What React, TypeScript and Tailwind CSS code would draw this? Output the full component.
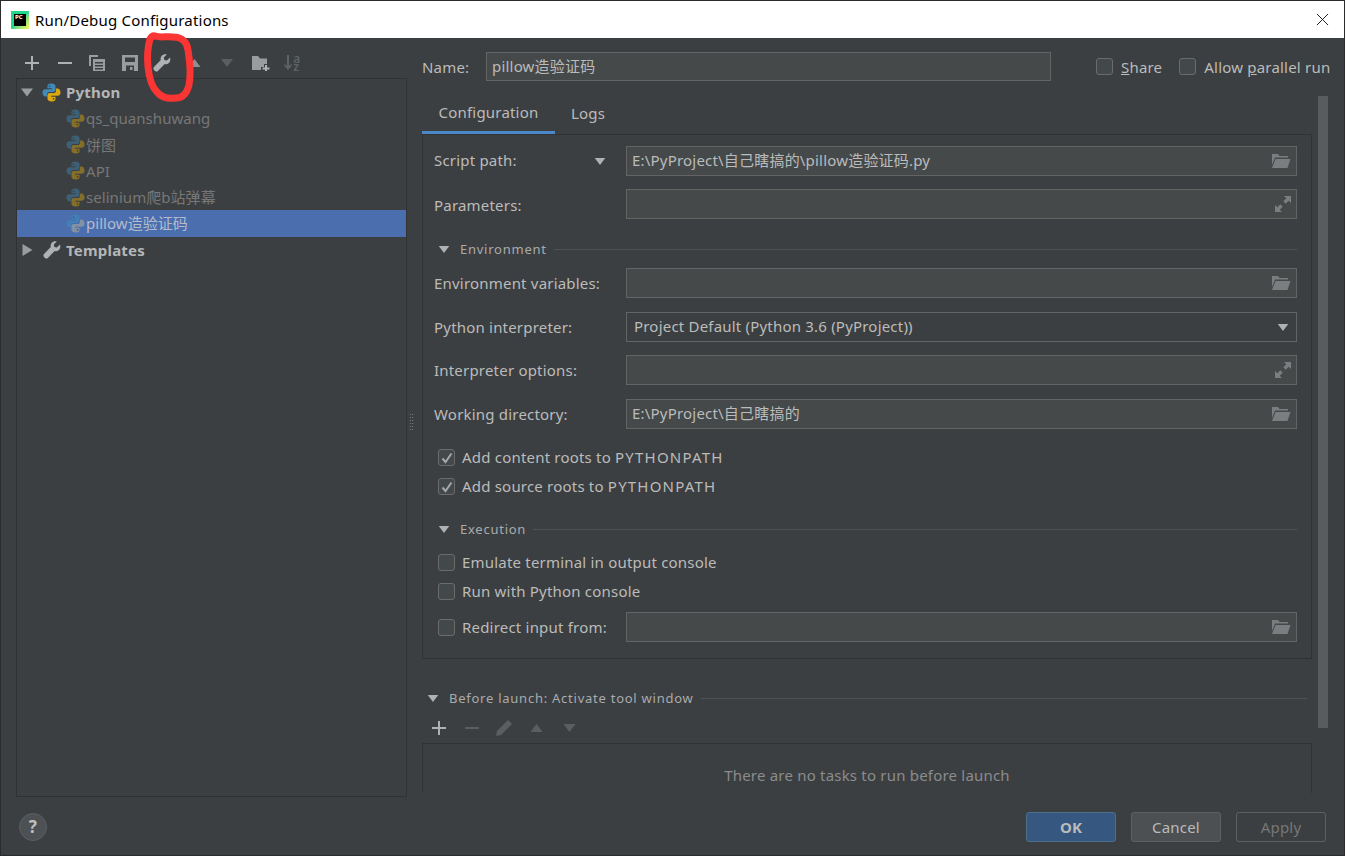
import type { ReactNode } from 'react';

const FONT = 'font-["Noto_Sans","Noto_Sans_CJK_SC",sans-serif]';

function PythonLogo({ className = '', dim = '', yellow = '#d9a70f' }: { className?: string; dim?: string; yellow?: string }) {
  const blue = 'M8 .4C5.2.4 4.6 1.600 4.6 2.800v1.700H8.200v.7H2.900C1.500 5.200.4 6.100.4 8s1.100 3.400 2.400 3.400h1.400V9.500C4.200 8.300 5.100 7.500 6.200 7.500h3.400c1 0 1.800-.7 1.800-1.700V2.800C11.400 1.500 10 .4 8 .4z';
  return (
    <svg viewBox="0 0 16 16" className={`${className} ${dim}`}>
      <path d={blue} fill="#3f8ab8" />
      <circle cx="6.300" cy="2.700" r=".7" fill="#3c3f41" />
      <g transform="rotate(180 8 8)">
        <path d={blue} fill={yellow} />
        <circle cx="6.300" cy="2.700" r=".7" fill="#3c3f41" />
      </g>
    </svg>
  );
}

function Tri({ down = true, className = 'w-3 h-2', fill = '#afb1b3' }: { down?: boolean; className?: string; fill?: string }) {
  return (
    <svg viewBox="0 0 12 8" className={className}>
      <path d={down ? 'M0 0h12L6 8z' : 'M6 0l6 8H0z'} fill={fill} />
    </svg>
  );
}

function TreeArrowRight() {
  return (
    <svg viewBox="0 0 10 12" className="w-[11px] h-[12px]">
      <path d="M0 0l10 6-10 6z" fill="#9a9da0" />
    </svg>
  );
}

function Wrench({ className = 'w-[18px] h-[18px]' }: { className?: string }) {
  return (
    <svg viewBox="0 0 18 18" className={className}>
      <path
        d="M17 3.500l-3.200 3-2.400-.6-.6-2.400 3-3.100c-2-.6-4 0-5.100 1.300-1.100 1.200-1.400 2.900-.9 4.300L1 13c-.8.800-.8 2 0 2.900l1 1c.9.800 2.100.8 2.900 0l6.800-6.900c1.400.4 3 .1 4.200-1 1.300-1.300 1.800-3.300 1.100-5.500z"
        fill="#afb1b3"
      />
    </svg>
  );
}

function FolderOpen() {
  return (
    <svg viewBox="0 0 20 14" className="w-5 h-[14px]">
      <path d="M1 0h6l1.500 2H17v1.500H4L1 11z" fill="#7b7e80" />
      <path d="M4.500 5H19.500L16.500 14H1z" fill="#7b7e80" />
    </svg>
  );
}

function Expand() {
  return (
    <svg viewBox="0 0 16 16" className="w-4 h-4">
      <path d="M9 0h7v7l-2.300-2.300-3 3-2.400-2.400 3-3zM0 9l2.300 2.300 3-3 2.400 2.400-3 3L7 16H0z" fill="#7b7e80" />
    </svg>
  );
}

function Field({ value, icon }: { value?: string; icon?: ReactNode }) {
  return (
    <div className="flex-1 h-[30px] flex items-center justify-between pl-[5px] pr-[5px] bg-[#45494a] border border-[#646464] text-[#bbbbbb] whitespace-nowrap">
      <span className="-mt-[2px]">{value}</span>
      {icon}
    </div>
  );
}

function Row({ label, className = '', children }: { label: ReactNode; className?: string; children: ReactNode }) {
  return (
    <div className={`flex items-center h-[30px] ${className}`}>
      <div className="w-[192px] shrink-0">{label}</div>
      {children}
    </div>
  );
}

function CheckBox({ checked = false }: { checked?: boolean }) {
  return (
    <span className="w-[17px] h-[17px] shrink-0 rounded-[3px] border border-[#6b6b6b] bg-[#43494a] flex items-center justify-center">
      {checked && (
        <svg viewBox="0 0 12 12" className="w-3 h-3">
          <path d="M1.500 6.500L4.500 10 10.500 1.500" fill="none" stroke="#a7a7a7" strokeWidth="2" />
        </svg>
      )}
    </span>
  );
}

function CheckRow({ label, checked }: { label: ReactNode; checked?: boolean }) {
  return (
    <div className="flex items-center h-[29px] pl-1 gap-[7px]">
      <CheckBox checked={checked} />
      <span className="-mt-[2px]">{label}</span>
    </div>
  );
}

function SectionHead({ label, className = '' }: { label: string; className?: string }) {
  return (
    <div className={`flex items-center h-5 ${className}`}>
      <Tri className="w-3 h-[7px]" />
      <span className="ml-[10px] text-[13px] tracking-[0.75px] text-[#a9abad] whitespace-nowrap">{label}</span>
      <div className="flex-1 h-px bg-[#515151] ml-[7px]" />
    </div>
  );
}

function TreeItem({ label, selected }: { label: string; selected?: boolean }) {
  return (
    <div className={`flex items-center h-[26.25px] pl-[49px] gap-[1px] tracking-[0.05px] ${selected ? 'bg-[#4b6eaf] text-[#b3bccb]' : 'text-[#777777]'}`}>
      <PythonLogo
        className="w-[19px] h-[19px]"
        dim={selected ? 'opacity-60' : 'opacity-45'}
        yellow={selected ? '#a9a9a0' : '#d9a70f'}
      />
      <span>{label}</span>
    </div>
  );
}

function ToolBtn({ children }: { children: ReactNode }) {
  return <div className="w-[32.5px] h-[26px] flex items-center justify-center">{children}</div>;
}

const Plus = () => (
  <svg viewBox="0 0 14 14" className="w-[14px] h-[14px]">
    <path d="M6 0h2v6h6v2H8v6H6V8H0V6h6z" fill="#afb1b3" />
  </svg>
);
const Minus = ({ fill = '#afb1b3' }: { fill?: string }) => (
  <svg viewBox="0 0 14 14" className="w-[14px] h-[14px]">
    <path d="M0 6h14v2H0z" fill={fill} />
  </svg>
);

function LeftToolbar() {
  return (
    <div className="flex h-[40px] pt-3 pl-[15px]">
      <ToolBtn><Plus /></ToolBtn>
      <ToolBtn><Minus /></ToolBtn>
      <ToolBtn>
        <svg viewBox="0 0 16 16" className="w-4 h-4">
          <path d="M0 0h9v2H2v9H0z" fill="#9a9da0" />
          <path d="M4 4h12v12H4zM6 7v1.500h8V7zm0 3v1.500h8V10zm0 3v1.500h8V13z" fill="#9a9da0" fillRule="evenodd" />
        </svg>
      </ToolBtn>
      <ToolBtn>
        <svg viewBox="0 0 16 16" className="w-4 h-4">
          <path d="M0 0h16v16H0zM3 2.500V7h10V2.500zM4 10.500V16h8v-5.500zM8 12h2.500v3H8z" fill="#9a9da0" fillRule="evenodd" />
        </svg>
      </ToolBtn>
      <ToolBtn><Wrench className="w-[18px] h-[18px]" /></ToolBtn>
      <ToolBtn><Tri down={false} className="w-[13px] h-[8px]" fill="#8c8f91" /></ToolBtn>
      <ToolBtn><Tri className="w-[14px] h-[8px]" fill="#5b5e60" /></ToolBtn>
      <ToolBtn>
        <svg viewBox="0 0 18 16" className="w-[18px] h-4 ml-[2px]">
          <path d="M0 1h6l2 2.500h7V9h-3v3H9v3H0z" fill="#9a9da0" />
          <path d="M13 10h2v2.500h2.500v2H15V17h-2v-2.500h-2.500v-2H13z" fill="#afb1b3" />
        </svg>
      </ToolBtn>
      <ToolBtn>
        <div className="flex items-center gap-[1px]">
          <svg viewBox="0 0 8 16" className="w-2 h-4">
            <path d="M3 0h2v11l2.500-2.500V11L4 15 .5 11V8.500L3 11z" fill="#5f6264" />
          </svg>
          <div className="flex flex-col text-[12px] leading-[8px] font-semibold tracking-normal text-[#5f6264]">
            <span>a</span>
            <span>z</span>
          </div>
        </div>
      </ToolBtn>
    </div>
  );
}

function ConfigTree() {
  return (
    <div className="ml-[15px] w-[391px] h-[719px] border border-[#2f3132] border-r-[#323232]">
      <div className="flex items-center h-[26.25px] pl-1 font-bold text-[#b4b6b8]">
        <Tri className="w-3 h-[11px]" fill="#9a9da0" />
        <PythonLogo className="w-[19px] h-[19px] ml-[9px]" />
        <span className="ml-[5px]">Python</span>
      </div>
      <TreeItem label="qs_quanshuwang" />
      <TreeItem label="饼图" />
      <TreeItem label="API" />
      <TreeItem label="selinium爬b站弹幕" />
      <TreeItem label="pillow造验证码" selected />
      <div className="flex items-center h-[26.25px] pl-[5px] font-bold text-[#b4b6b8]">
        <TreeArrowRight />
        <Wrench className="w-[18px] h-[18px] ml-[10px]" />
        <span className="ml-[5px]">Templates</span>
      </div>
    </div>
  );
}

function ConfigForm() {
  return (
    <div className="border border-[#323232] pt-[11px] pb-[16px] pl-[11px] pr-[14px]">
      <Row
        label={
          <div className="flex items-center justify-between pr-[20px]">
            <span className="-mt-[2px]">Script path:</span>
            <Tri className="w-3 h-[7px]" />
          </div>
        }
      >
        <Field value="E:\PyProject\自己瞎搞的\pillow造验证码.py" icon={<FolderOpen />} />
      </Row>
      <Row label={<span className="block mt-[2px]">Parameters:</span>} className="mt-[13px]">
        <Field icon={<Expand />} />
      </Row>
      <SectionHead label="Environment" className="mt-5 pl-1" />
      <Row label="Environment variables:" className="mt-[9px]">
        <Field icon={<FolderOpen />} />
      </Row>
      <Row label="Python interpreter:" className="mt-[14px]">
        <div className="flex-1 h-[30px] flex items-center justify-between pl-[7px] pr-[7px] bg-[#3c3f41] border border-[#646464] text-[#bbbbbb]">
          <span className="-mt-[2px]">Project Default (Python 3.6 (PyProject))</span>
          <Tri className="w-3 h-[7px]" />
        </div>
      </Row>
      <Row label="Interpreter options:" className="mt-[13px]">
        <Field icon={<Expand />} />
      </Row>
      <Row label="Working directory:" className="mt-[14px]">
        <Field value="E:\PyProject\自己瞎搞的" icon={<FolderOpen />} />
      </Row>
      <div className="mt-[14px]">
        <CheckRow label={<>Add content roots to <span className="tracking-[1.2px]">PYTHONPATH</span></>} checked />
        <CheckRow label={<>Add source roots to <span className="tracking-[1.2px]">PYTHONPATH</span></>} checked />
      </div>
      <SectionHead label="Execution" className="mt-[18px] pl-1" />
      <div className="mt-[9px]">
        <CheckRow label="Emulate terminal in output console" />
        <CheckRow label="Run with Python console" />
      </div>
      <div className="flex items-center h-[30px] mt-[6px] pl-1">
        <div className="w-[188px] flex items-center gap-[7px] shrink-0">
          <CheckBox />
          <span>Redirect input from:</span>
        </div>
        <Field icon={<FolderOpen />} />
      </div>
    </div>
  );
}

function BeforeLaunch() {
  return (
    <div className="mt-[29px]">
      <SectionHead label="Before launch: Activate tool window" className="pl-[5px] pr-[5px]" />
      <div className="flex h-[26px] mt-[7px] ml-px">
        <ToolBtn><Plus /></ToolBtn>
        <ToolBtn><Minus fill="#5b5e60" /></ToolBtn>
        <ToolBtn>
          <svg viewBox="0 0 18 18" className="w-[18px] h-[18px]">
            <path d="M13 1l4 4L6 16l-5 1 1-5z" fill="#5b5e60" />
          </svg>
        </ToolBtn>
        <ToolBtn><Tri down={false} className="w-[15px] h-[8px]" fill="#5b5e60" /></ToolBtn>
        <ToolBtn><Tri className="w-[15px] h-[8px]" fill="#5b5e60" /></ToolBtn>
      </div>
      <div className="h-[50px] mt-[2px] border border-b-0 border-[#323232] flex items-center justify-center text-[#8a8c8e] pt-[12px]">
        There are no tasks to run before launch
      </div>
    </div>
  );
}

export default function App() {
  return (
    <div className={`relative w-[1345px] h-[856px] flex flex-col bg-[#3c3f41] border border-[#2b2b2b] text-[15px] leading-5 tracking-[0.2px] text-[#bbbbbb] overflow-hidden ${FONT}`}>
      {/* title bar */}
      <div className="h-[37px] shrink-0 bg-white flex items-center pl-[10px] text-black">
        <div className="w-[18px] h-[18px] bg-gradient-to-br from-[#21d789] via-[#21d789] to-[#fcf84a] p-[3px]">
          <div className="w-full h-full bg-black text-white text-[6px] leading-[7px] tracking-normal font-bold pl-[1px]">PC</div>
        </div>
        <span className="ml-[6px]">Run/Debug Configurations</span>
        <svg viewBox="0 0 14 14" className="w-[13px] h-[13px] ml-auto mr-[15px]">
          <path d="M1 1l12 12M13 1L1 13" stroke="#111" strokeWidth="1" fill="none" />
        </svg>
      </div>

      <div className="h-[759px] flex">
        {/* left */}
        <div className="w-[406px] shrink-0">
          <LeftToolbar />
          <ConfigTree />
        </div>

        {/* right */}
        <div className="flex-1 pl-[15px] min-w-0 relative">
          <div className="flex items-center h-[29px] mt-[14px]">
            <span className="w-[64px]">Name:</span>
            <div className="w-[565px] h-[29px] flex items-center pl-[5px] bg-[#45494a] border border-[#646464]">
              <span className="-mt-[2px]">pillow造验证码</span>
            </div>
            <div className="ml-[45px] flex items-center gap-2">
              <CheckBox />
              <span><u>S</u>hare</span>
            </div>
            <div className="ml-[17px] flex items-center gap-2 whitespace-nowrap">
              <CheckBox />
              <span>Allow <u>p</u>arallel run</span>
            </div>
          </div>

          <div className="flex gap-[6px] mt-[15px]">
            <div className="w-[890px] h-[697px] overflow-hidden">
              <div className="flex h-[38px]">
                <div className="w-[133px] h-[38px] pb-1 flex items-center justify-center border-b-[3px] border-[#4a88c7]">Configuration</div>
                <div className="ml-4 h-[33px] flex items-center">Logs</div>
              </div>
              <ConfigForm />
              <BeforeLaunch />
            </div>
            <div className="w-[10px] h-[632px] bg-[#595b5d]" />
          </div>

          {/* splitter grip */}
          <div className="absolute left-[2px] top-[375px] w-[5px] h-[19px] bg-[radial-gradient(#8a8c8e_0.7px,transparent_0.8px)] bg-[length:2.500px_3px]" />
        </div>
      </div>

      {/* footer */}
      <div className="flex-1 flex items-center pt-[2px] pl-[18px] pr-[18px]">
        <div className="w-[28px] h-[28px] rounded-full bg-[#4d5153] border border-[#5b5f61] flex items-center justify-center font-bold text-[#bdbfc1] text-[17px]">?</div>
        <div className="ml-auto flex gap-[15px]">
          <div className="w-[90px] h-[30px] rounded-[3px] bg-[#365880] border border-[#4c708c] flex items-center justify-center font-bold text-[#bbbbbb]">OK</div>
          <div className="w-[90px] h-[30px] rounded-[3px] bg-[#4c5052] border border-[#5e6060] flex items-center justify-center">Cancel</div>
          <div className="w-[90px] h-[30px] rounded-[3px] border border-[#5e6060] flex items-center justify-center text-[#777777]">Apply</div>
        </div>
      </div>

      {/* red marker scribble around the wrench */}
      <svg viewBox="0 0 1345 856" className="absolute -left-px -top-px w-[1345px] h-[856px] pointer-events-none">
        <path
          d="M155 36c5 2 12 0 18 1 8 0 14 4 15 13 2 12 3 25 1 35-2 8-6 13-13 13-8 1-15-1-19-6-6-6-8-15-9-25-1-10 0-21 2-28 1-2 3-4 5-3"
          fill="none"
          stroke="#fb3434"
          strokeWidth="7"
          strokeLinecap="round"
        />
      </svg>
    </div>
  );
}
